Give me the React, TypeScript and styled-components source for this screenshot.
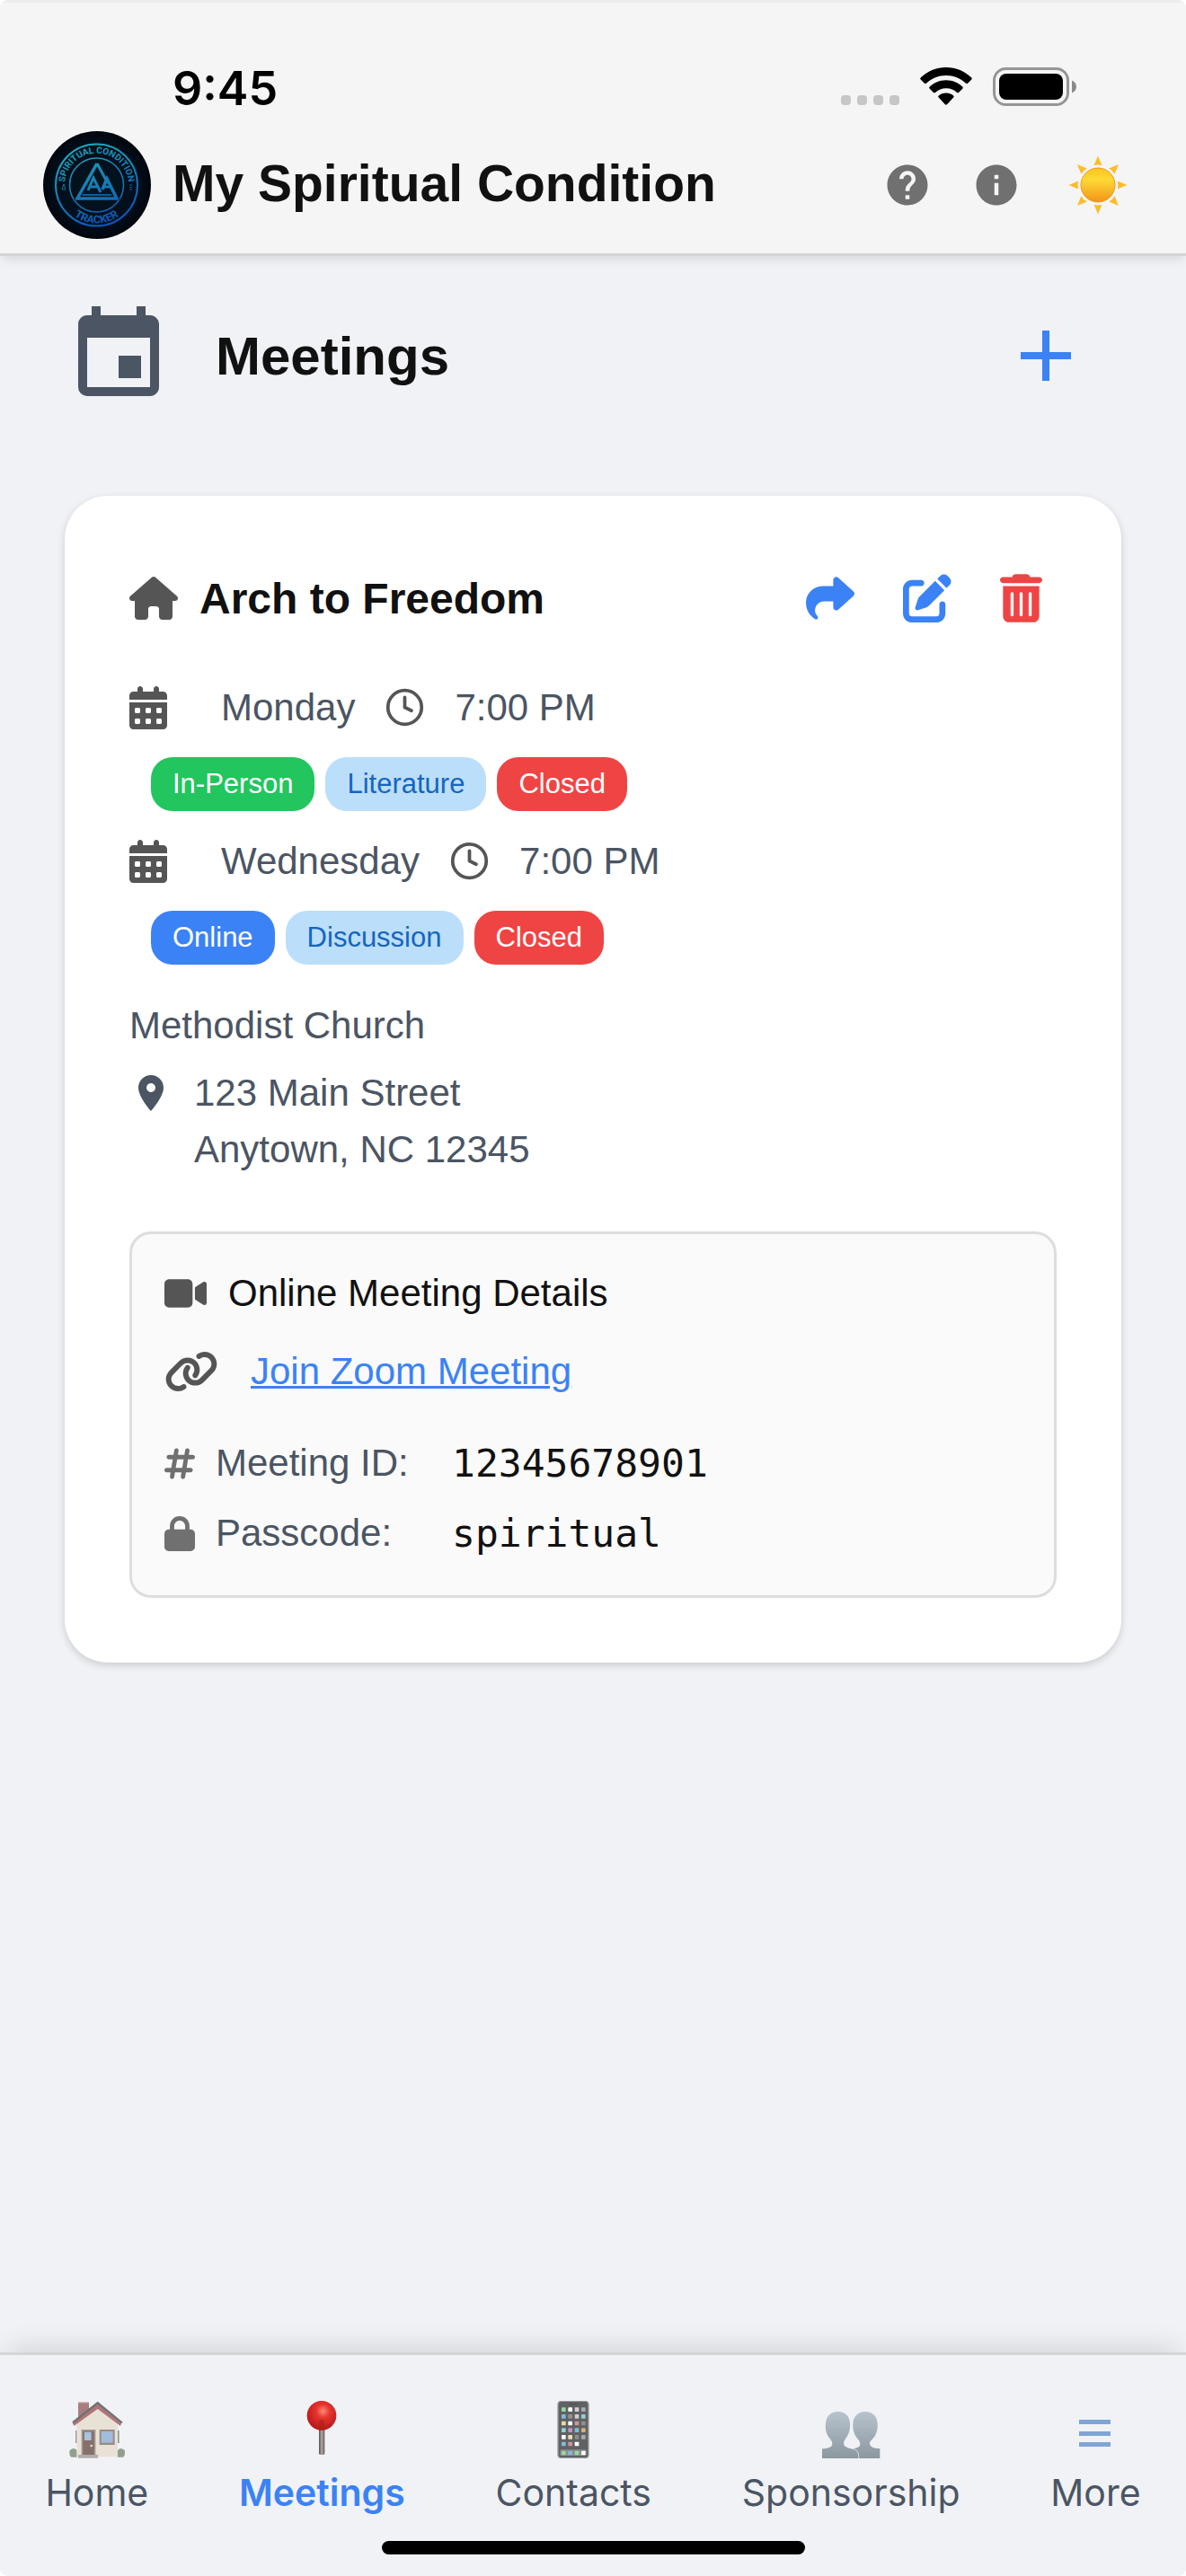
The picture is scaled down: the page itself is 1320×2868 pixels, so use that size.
import React, { useState } from "react";
import styled, { createGlobalStyle } from "styled-components";
import { Clock } from "lucide-react";
import {
  FaCalendarDays,
  FaHashtag,
  FaHouse,
  FaLink,
  FaLock,
  FaPenToSquare,
  FaShare,
  FaTrashCan,
  FaVideo,
} from "react-icons/fa6";
import { MdAdd, MdEvent, MdHelp, MdInfo, MdPlace } from "react-icons/md";

const GlobalStyle = createGlobalStyle`
  * {
    box-sizing: border-box;
  }

  body {
    margin: 0;
    background: #ffffff;
    font-family: "Liberation Sans", Arial, Helvetica, sans-serif;
    color: #111111;
  }

  button {
    display: flex;
    align-items: center;
    justify-content: center;
    padding: 0;
    border: none;
    background: none;
    font: inherit;
    color: inherit;
    cursor: pointer;
  }

  svg {
    display: block;
    flex-shrink: 0;
  }
`;

const PageWrapper = styled.div`
  min-height: 100vh;
  display: flex;
  flex-direction: column;
  background: #f0f2f6;
  border-radius: 9px;
  overflow: hidden;
`;

const Header = styled.header`
  padding-bottom: 16px;
  background: #f5f5f5;
  border-bottom: 3px solid #d4d4d5;
  box-shadow: inset 0 3px 0 #ececec, 0 6px 12px -3px rgba(0, 0, 0, 0.12);
`;

const StatusBar = styled.div`
  height: 146px;
  display: flex;
  align-items: center;
  justify-content: space-between;
  padding: 50px 122px 0 192px;
`;

const StatusTime = styled.span`
  font-family: Inter, sans-serif;
  font-weight: 600;
  font-size: 52px;
  color: #000000;
`;

const StatusIcons = styled.div`
  display: flex;
  align-items: center;
  gap: 23px;
  padding-bottom: 4px;
`;

const TitleBar = styled.div`
  display: flex;
  align-items: center;
  gap: 24px;
  padding: 0 57px 0 48px;
`;

const AppTitle = styled.h1`
  margin: 0;
  flex: 1;
  padding-bottom: 4px;
  font-weight: bold;
  font-size: 57px;
`;

const HeaderActions = styled.div`
  display: flex;
  align-items: center;
  gap: 45px;
  color: #707070;
`;

const Main = styled.main`
  flex: 1;
  padding: 51px 72px 96px;
`;

const PageHeader = styled.div`
  display: flex;
  align-items: center;
  gap: 48px;
  margin-bottom: 96px;
  padding-right: 36px;
  color: #4b5563;
`;

const PageTitle = styled.h2`
  margin: 0;
  flex: 1;
  font-weight: bold;
  font-size: 60px;
  color: #111111;
`;

const AddButton = styled.button`
  && {
    color: #3b82f6;
  }
`;

const Card = styled.article`
  padding: 72px;
  background: #ffffff;
  border-radius: 48px;
  box-shadow: 0 3px 9px rgba(0, 0, 0, 0.16);
`;

const Icon = styled.span<{ $width: number; $height: number; $color?: string }>`
  display: flex;
  color: ${({ $color }) => $color || "#555555"};

  svg {
    width: ${({ $width }) => $width}px;
    height: ${({ $height }) => $height}px;
  }
`;

const CardHeader = styled.div`
  min-height: 84px;
  display: flex;
  align-items: center;
  gap: 24px;
  margin-bottom: 48px;
  padding-right: 16px;
`;

const CardTitle = styled.h3`
  margin: 0;
  flex: 1;
  font-weight: bold;
  font-size: 48px;
`;

const CardActions = styled.div`
  display: flex;
  gap: 54px;
`;

const Session = styled.div`
  margin-bottom: 24px;
`;

const SessionTime = styled.div`
  display: flex;
  align-items: center;
  gap: 33px;
  font-size: 42px;
  line-height: 63px;
  color: #4b5563;
`;

const SessionDay = styled.span`
  padding-left: 27px;
`;

const ChipRow = styled.div`
  display: flex;
  gap: 12px;
  margin-top: 24px;
  padding-left: 24px;
`;

const Chip = styled.span<{ $bg: string; $color: string }>`
  padding: 0 24px;
  border-radius: 24px;
  font-size: 31px;
  line-height: 60px;
  background: ${({ $bg }) => $bg};
  color: ${({ $color }) => $color};
`;

const Location = styled.div`
  display: flex;
  flex-direction: column;
  gap: 12px;
  margin: 36px 0 60px;
  font-size: 42px;
  line-height: 63px;
  color: #4b5563;
`;

const Address = styled.address`
  display: flex;
  gap: 24px;
  font-style: normal;
`;

const AddressIcon = styled.span`
  height: 63px;
  display: flex;
  align-items: center;
`;

const OnlineBox = styled.section`
  padding: 36px 36px 39px;
  border: 3px solid #dddddd;
  border-radius: 24px;
  background: #fafafa;
  font-size: 42px;
  line-height: 60px;
`;

const OnlineTitle = styled.div`
  display: flex;
  align-items: center;
  gap: 24px;
`;

const JoinRow = styled.div`
  display: flex;
  align-items: center;
  gap: 36px;
  margin: 27px 0 42px;
`;

const JoinLink = styled.a`
  color: #3b82f6;
  text-decoration: underline;
  text-decoration-thickness: 3px;
`;

const DetailList = styled.dl`
  display: grid;
  gap: 18px;
  margin: 0;
`;

const DetailRow = styled.div`
  display: flex;
  align-items: center;
  gap: 23px;
`;

const DetailLabel = styled.dt`
  width: 240px;
  color: #4b5563;
`;

const DetailValue = styled.dd`
  margin: 0;
  font-family: "DejaVu Sans Mono", Menlo, monospace;
  font-size: 43px;
`;

const Footer = styled.footer`
  padding-top: 51px;
  background: #f0f2f6;
  border-top: 3px solid #d3d5d6;
  box-shadow: 0 -12px 30px -9px rgba(0, 0, 0, 0.14);
`;

const NavBar = styled.nav`
  display: flex;
  justify-content: space-around;
`;

const NavButton = styled.button<{ $active: boolean }>`
  && {
    flex-direction: column;
    gap: 14px;
    font-family: Inter, sans-serif;
    font-weight: ${({ $active }) => ($active ? 600 : 400)};
    font-size: 41px;
    line-height: 48px;
    color: ${({ $active }) => ($active ? "#3b82f6" : "#4b5563")};
  }
`;

const HomeIndicator = styled.div`
  width: 471px;
  max-width: 60%;
  height: 15px;
  margin: 30px auto 24px;
  border-radius: 8px;
  background: #000000;
`;

const SignalIcon: React.FC = () => (
  <svg width="65" height="42" viewBox="0 0 65 42" fill="#c6c6c6">
    {[0, 18, 36, 54].map((x) => (
      <rect key={x} x={x} y="31" width="11" height="11" rx="4" />
    ))}
  </svg>
);

const WifiIcon: React.FC = () => (
  <svg width="58" height="42" viewBox="0 0 58 42">
    <path d="M29 0C40 0 50 4.300 57.300 11.500c.6.600.6 1.500 0 2.100l-4.200 4.200c-.6.600-1.500.6-2.100 0C45 12 37.300 9 29 9S13 12 7 17.800c-.6.600-1.500.6-2.100 0L.7 13.600c-.6-.6-.6-1.500 0-2.100C8 4.300 18 0 29 0z" />
    <path d="M29 14.300c7 0 13.500 2.700 18.300 7.300.6.600.6 1.500 0 2.100l-4.300 4.200c-.6.600-1.500.6-2 0A17.300 17.300 0 0 0 29 23.300c-4.500 0-8.700 1.700-12 4.600-.5.600-1.400.6-2 0l-4.300-4.200c-.6-.6-.6-1.500 0-2.100C15.500 17 22 14.300 29 14.300z" />
    <path d="M29 28.500c3.200 0 6 1.200 8.200 3.100.6.600.6 1.400 0 2L30 41.300c-.6.600-1.500.6-2.100 0l-7.200-7.700c-.6-.6-.6-1.400 0-2 2.200-1.900 5.100-3.100 8.300-3.100z" />
  </svg>
);

const BatteryIcon: React.FC = () => (
  <svg width="93" height="43" viewBox="0 0 93 43">
    <rect x="1.500" y="1.500" width="82" height="40" rx="13" fill="none" stroke="#959595" strokeWidth="3" />
    <rect x="7" y="7" width="71" height="29" rx="8" />
    <path d="M88 14.500c3 1.200 5 3.900 5 7s-2 5.800-5 7z" fill="#8a8a8a" />
  </svg>
);

const Logo: React.FC = () => (
  <svg width="120" height="120" viewBox="0 0 120 120" role="img" aria-label="Spiritual Condition Tracker">
    <defs>
      <radialGradient id="logoBg">
        <stop offset="0" stopColor="#02151f" />
        <stop offset="0.75" stopColor="#020f1c" />
        <stop offset="1" stopColor="#01060d" />
      </radialGradient>
      <linearGradient id="logoLine" x1="35" y1="14" x2="75" y2="106" gradientUnits="userSpaceOnUse">
        <stop offset="0" stopColor="#22adbd" />
        <stop offset="0.5" stopColor="#167fb4" />
        <stop offset="1" stopColor="#1150b8" />
      </linearGradient>
      <path id="logoTop" d="M24.500 66A35.500 35.500 0 1 1 94.500 66" />
      <path id="logoBottom" d="M17 60A42.500 42.500 0 0 0 102 60" />
    </defs>
    <circle cx="60" cy="60" r="60" fill="url(#logoBg)" />
    <g fill="none" stroke="url(#logoLine)">
      <circle cx="59.500" cy="60" r="45.500" strokeWidth="2" />
      <circle cx="59.500" cy="60" r="30" strokeWidth="1.600" />
    </g>
    <path d="M60 33L34 77H86L72 53" fill="#031420" />
    <g fill="none" stroke="url(#logoLine)" strokeLinejoin="miter">
      <path d="M60 36L38 75H82L71 53L66 65" strokeWidth="3.500" />
      <path d="M60 36L72 58M50 66L56 52L64 68M52 62H61M67 62H76" strokeWidth="3" />
      <path d="M44 71H76" strokeWidth="1.500" />
      <path d="M21 65L23 59L25 65zM96 60H99M96 62.500H99M96 65H99" strokeWidth="0.800" />
    </g>
    <g fill="url(#logoLine)" fontFamily="Roboto, sans-serif" fontWeight="700" textAnchor="middle">
      <text fontSize="10">
        <textPath href="#logoTop" startOffset="50%">
          SPIRITUAL CONDITION
        </textPath>
      </text>
      <text fontSize="12">
        <textPath href="#logoBottom" startOffset="50%">
          TRACKER
        </textPath>
      </text>
    </g>
  </svg>
);

const SunIcon: React.FC = () => (
  <svg width="82" height="82" viewBox="0 0 82 82">
    <defs>
      <linearGradient id="sunBody" x1="0" y1="0" x2="0" y2="1">
        <stop offset="0" stopColor="#fbc420" />
        <stop offset="0.35" stopColor="#fdd935" />
        <stop offset="1" stopColor="#f29317" />
      </linearGradient>
      <linearGradient id="sunRay" x1="0" y1="8" x2="0" y2="74" gradientUnits="userSpaceOnUse">
        <stop offset="0" stopColor="#fbc02a" />
        <stop offset="1" stopColor="#f6a02c" />
      </linearGradient>
    </defs>
    <g fill="url(#sunRay)">
      {[0, 45, 90, 135, 180, 225, 270, 315].map((angle) => (
        <path key={angle} d="M41 8.500L45.500 19.200Q41 17.800 36.500 19.200z" transform={`rotate(${angle} 41 41)`} />
      ))}
    </g>
    <circle cx="41" cy="41" r="19" fill="url(#sunBody)" stroke="#e89a1c" />
  </svg>
);

const HomeIcon: React.FC = () => (
  <svg width="72" height="64" viewBox="0 0 216 192">
    <g transform="translate(16 1)">
      <path d="M29 4H65V40L29 62z" fill="#a97d80" />
      <path d="M29 4H65V9H29z" fill="#b98f90" />
      <path d="M24 76L94 20L161 74V186H24z" fill="#e8e2d6" />
      <path d="M20 98h4v42h-4zM161 98h5v42h-5z" fill="#8e9a94" />
      <path d="M94 8L174 72L170 83L94 26L16 82L10 74z" fill="#b0757a" />
      <path d="M94 1L178 70L174 74L94 10L13 74L9 69z" fill="#6c7070" />
      <path d="M40 95H87V180H40z" fill="#a3948f" />
      <path d="M45 100H82V180H45z" fill="#85706a" />
      <path d="M50 103H73V131H50z" fill="#a9c3dd" />
      <circle cx="73" cy="149" r="4" fill="#e6ddd2" />
      <path d="M100 95H151V146H100z" fill="#9a8a86" />
      <path d="M106 101H145V139H106z" fill="#a2bcdb" />
      <path d="M0 174a13 13 0 0 1 24-9v22H6q-6-3-6-13zM185 174a13 13 0 0 0-24-9v22h18q6-3 6-13z" fill="#91a08d" />
      <path d="M30 179H95V190H28z" fill="#b0abad" />
    </g>
  </svg>
);

const PinIcon: React.FC = () => (
  <svg width="72" height="64" viewBox="0 0 216 192">
    <defs>
      <radialGradient id="pinHead" cx="0.55" cy="0.35" r="0.65">
        <stop offset="0" stopColor="#ff8a78" />
        <stop offset="0.35" stopColor="#e8352f" />
        <stop offset="1" stopColor="#b5161b" />
      </radialGradient>
      <linearGradient id="pinStick">
        <stop offset="0" stopColor="#55504d" />
        <stop offset="0.5" stopColor="#b7a89d" />
        <stop offset="1" stopColor="#5d5753" />
      </linearGradient>
    </defs>
    <rect x="99" y="80" width="19" height="100" rx="5" fill="url(#pinStick)" />
    <circle cx="108" cy="49" r="49" fill="url(#pinHead)" />
    <path d="M98 66q10-6 20 0v29q-10 4-20 2z" fill="#a82318" opacity="0.6" />
  </svg>
);

const phoneApps = [
  ["#98d6a0", "#ffffff", "#d3cdd1", "#a9abae"],
  ["#80bcd8", "#949494", "#d3cdd1", "#95d0dc"],
  ["#e4df9c", "#ffffff", "#cf9296", "#8e8e8e"],
  ["#94d2d2", "#c891c6", "#80bcd8", "#d8b274"],
  ["#ffffff", "#ece0b0", "#8e8e8e", "#a9abae"],
  ["#80bcd8", "#cf9296", "#ffffff"],
];

const PhoneIcon: React.FC = () => (
  <svg width="72" height="64" viewBox="0 0 216 192">
    <rect x="57" y="1" width="102" height="190" rx="11" fill="#606163" stroke="#9b9c9e" strokeWidth="4" />
    <path d="M97 11H121" stroke="#4c4d4f" strokeWidth="4" />
    {phoneApps.map((row, y) =>
      row.map((color, x) => (
        <rect key={`${x}-${y}`} x={69 + x * 22} y={22 + y * 23} width="14" height="14" rx="2" fill={color} />
      ))
    )}
    <rect x="64" y="163" width="88" height="20" rx="4" fill="#8b8c8e" />
    {["#98d6a0", "#80bcd8", "#98d6a0", "#ffffff"].map((color, x) => (
      <rect key={x} x={69 + x * 22} y="167" width="14" height="14" rx="2" fill={color} />
    ))}
  </svg>
);

const PeopleIcon: React.FC = () => (
  <svg width="72" height="64" viewBox="0 0 216 192">
    <defs>
      <linearGradient id="people" x1="0" y1="0" x2="0" y2="1">
        <stop offset="0" stopColor="#b6c3cd" />
        <stop offset="1" stopColor="#8c979f" />
      </linearGradient>
    </defs>
    <g transform="translate(12 36)" fill="url(#people)">
      <path d="M124 156C124 138 118 127 103 124C118 121 127 118 127 108C127 98 118 92 112 82C106 72 102 60 103 40C105 12 124 0 144 0S184 12 185 40C186 60 182 72 176 82C170 92 159 98 159 106C159 120 176 123 193 124V156z" />
      <path d="M0 156V124C18 123 34 120 34 108C34 98 26 92 20 82C14 72 10 60 12 40C14 12 32 0 53 0S92 12 93 40C94 60 90 72 84 82C78 92 72 98 72 106C72 120 90 122 105 126C118 130 121 138 122 156z" />
    </g>
  </svg>
);

const MoreIcon: React.FC = () => (
  <svg width="72" height="64" viewBox="0 0 72 64" fill="#7fa5d6">
    <path d="M18 21H53V26H18zM18 34H53V39H18zM18 46H53V51H18z" />
  </svg>
);

const chipColors: Record<string, { bg: string; color: string }> = {
  "In-Person": { bg: "#22c55e", color: "#ffffff" },
  Online: { bg: "#3b82f6", color: "#ffffff" },
  Closed: { bg: "#ef4444", color: "#ffffff" },
};

const topicColors = { bg: "#bbdefb", color: "#1565c0" };

const sessions = [
  { day: "Monday", time: "7:00 PM", chips: ["In-Person", "Literature", "Closed"] },
  { day: "Wednesday", time: "7:00 PM", chips: ["Online", "Discussion", "Closed"] },
];

const navItems = [
  { label: "Home", icon: <HomeIcon /> },
  { label: "Meetings", icon: <PinIcon /> },
  { label: "Contacts", icon: <PhoneIcon /> },
  { label: "Sponsorship", icon: <PeopleIcon /> },
  { label: "More", icon: <MoreIcon /> },
];

const MeetingCard: React.FC = () => (
  <Card>
    <CardHeader>
      <Icon $width={54} $height={48}>
        <FaHouse />
      </Icon>
      <CardTitle>Arch to Freedom</CardTitle>
      <CardActions>
        <button aria-label="Share">
          <Icon $width={54} $height={54} $color="#3b82f6">
            <FaShare />
          </Icon>
        </button>
        <button aria-label="Edit">
          <Icon $width={54} $height={54} $color="#3b82f6">
            <FaPenToSquare />
          </Icon>
        </button>
        <button aria-label="Delete">
          <Icon $width={47} $height={54} $color="#ef4444">
            <FaTrashCan />
          </Icon>
        </button>
      </CardActions>
    </CardHeader>

    {sessions.map(({ day, time, chips }) => (
      <Session key={day}>
        <SessionTime>
          <Icon $width={42} $height={48}>
            <FaCalendarDays />
          </Icon>
          <SessionDay>{day}</SessionDay>
          <Icon $width={45} $height={45}>
            <Clock />
          </Icon>
          <span>{time}</span>
        </SessionTime>
        <ChipRow>
          {chips.map((chip) => {
            const { bg, color } = chipColors[chip] || topicColors;
            return (
              <Chip key={chip} $bg={bg} $color={color}>
                {chip}
              </Chip>
            );
          })}
        </ChipRow>
      </Session>
    ))}

    <Location>
      <span>Methodist Church</span>
      <Address>
        <AddressIcon>
          <MdPlace size={48} />
        </AddressIcon>
        <span>
          123 Main Street
          <br />
          Anytown, NC 12345
        </span>
      </Address>
    </Location>

    <OnlineBox>
      <OnlineTitle>
        <Icon $width={47} $height={42}>
          <FaVideo />
        </Icon>
        <span>Online Meeting Details</span>
      </OnlineTitle>
      <JoinRow>
        <Icon $width={60} $height={48}>
          <FaLink />
        </Icon>
        <JoinLink href="#join">Join Zoom Meeting</JoinLink>
      </JoinRow>
      <DetailList>
        <DetailRow>
          <Icon $width={34} $height={39} $color="#707070">
            <FaHashtag />
          </Icon>
          <DetailLabel>Meeting ID:</DetailLabel>
          <DetailValue>12345678901</DetailValue>
        </DetailRow>
        <DetailRow>
          <Icon $width={34} $height={39} $color="#707070">
            <FaLock />
          </Icon>
          <DetailLabel>Passcode:</DetailLabel>
          <DetailValue>spiritual</DetailValue>
        </DetailRow>
      </DetailList>
    </OnlineBox>
  </Card>
);

const App: React.FC = () => {
  const [active, setActive] = useState("Meetings");

  return (
    <PageWrapper>
      <GlobalStyle />
      <Header>
        <StatusBar>
          <StatusTime>9:45</StatusTime>
          <StatusIcons>
            <SignalIcon />
            <WifiIcon />
            <BatteryIcon />
          </StatusIcons>
        </StatusBar>
        <TitleBar>
          <Logo />
          <AppTitle>My Spiritual Condition</AppTitle>
          <HeaderActions>
            <button aria-label="Help">
              <MdHelp size={54} />
            </button>
            <button aria-label="About">
              <MdInfo size={54} />
            </button>
            <button aria-label="Toggle theme">
              <SunIcon />
            </button>
          </HeaderActions>
        </TitleBar>
      </Header>

      <Main>
        <PageHeader>
          <MdEvent size={120} />
          <PageTitle>Meetings</PageTitle>
          <AddButton aria-label="Add meeting">
            <MdAdd size={96} />
          </AddButton>
        </PageHeader>
        <MeetingCard />
      </Main>

      <Footer>
        <NavBar>
          {navItems.map(({ label, icon }) => (
            <NavButton key={label} $active={label === active} onClick={() => setActive(label)}>
              {icon}
              {label}
            </NavButton>
          ))}
        </NavBar>
        <HomeIndicator />
      </Footer>
    </PageWrapper>
  );
};

export default App;
